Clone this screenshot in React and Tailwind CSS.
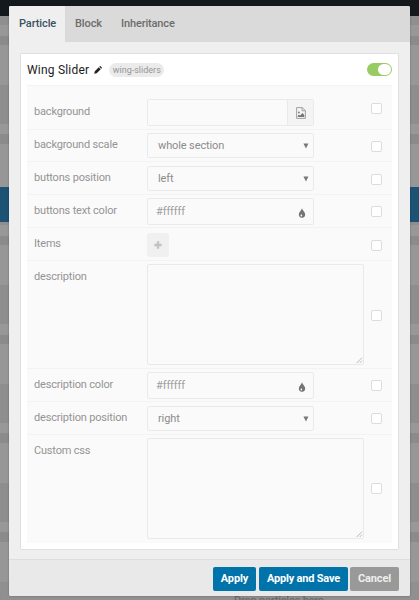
import React from "react";

const bands = [
  ["h-[16px]", "bg-[#14191d]"],
  ["h-[9px]", "bg-[#8f8f8f]"],
  ["h-[11px]", "bg-[#989898]"],
  ["h-[9px]", "bg-[#8b8b8b]"],
  ["h-[40px]", "bg-[#979797]"],
  ["h-[39px]", "bg-[#8e8e8e]"],
  ["h-[10px]", "bg-[#989898]"],
  ["h-[10px]", "bg-[#8b8b8b]"],
  ["h-[43px]", "bg-[#979797]"],
  ["h-[35px]", "bg-[#1c5274]"],
  ["h-[3px]", "bg-[#8e8e8e]"],
  ["h-[11px]", "bg-[#989898]"],
  ["h-[9px]", "bg-[#8b8b8b]"],
  ["h-[40px]", "bg-[#979797]"],
  ["h-[39px]", "bg-[#8e8e8e]"],
  ["h-[11px]", "bg-[#989898]"],
  ["h-[9px]", "bg-[#8b8b8b]"],
  ["h-[40px]", "bg-[#979797]"],
  ["h-[39px]", "bg-[#8e8e8e]"],
  ["h-[10px]", "bg-[#989898]"],
  ["h-[10px]", "bg-[#8b8b8b]"],
  ["h-[40px]", "bg-[#979797]"],
  ["h-[39px]", "bg-[#8e8e8e]"],
  ["h-[10px]", "bg-[#989898]"],
  ["h-[10px]", "bg-[#8b8b8b]"],
  ["h-[40px]", "bg-[#979797]"],
];

function Backdrop() {
  return (
    <div className="flex h-full flex-col">
      {bands.map(([h, bg], i) => (
        <div key={i} className={`shrink-0 ${h} ${bg}`} />
      ))}
      <div className="flex-1 overflow-hidden bg-[#909090] pt-[12px] pl-[234px] text-[11px] leading-[13px] font-medium tracking-[-0.2px] whitespace-nowrap text-[#6c6c6c]">
        Drop particles here
      </div>
    </div>
  );
}

function Row({ label, height, labelTop = "pt-[5px]", fieldTop = "pt-[3px]", check = "pt-[10px]", last, children }) {
  return (
    <div className={`flex shrink-0 pl-[7px] ${height} ${last ? "" : "border-b border-[#f3f3f3]"}`}>
      <div className={`w-[113px] shrink-0 text-[11px] leading-[14px] tracking-[-0.18px] whitespace-nowrap text-[#949494] ${labelTop}`}>{label}</div>
      <div className={`w-[228px] shrink-0 ${fieldTop}`}>{children}</div>
      <div className={`-ml-[4px] ${check}`}>
        <div className="size-[11px] rounded-[2px] border border-[#dcdcdc] bg-white" />
      </div>
    </div>
  );
}

function Select({ value }) {
  return (
    <div className="flex h-[25px] w-[167px] items-center justify-between rounded-[2px] border border-[#eaeaea] pr-[4px] pl-[10px] text-[11px] tracking-[-0.12px] text-[#8c8c8c]">
      <span className="pt-[2px]">{value}</span>
      <svg width="6" height="6" viewBox="0 0 6 6" fill="#777">
        <path d="M.4.4h5L3 5.4z" />
      </svg>
    </div>
  );
}

function ColorInput() {
  return (
    <div className="flex h-[27px] w-[167px] items-center justify-between rounded-[2px] border border-[#eaeaea] pr-[7px] pl-[8px] text-[11px] tracking-[-0.1px] text-[#9f9f9f]">
      <span className="pt-[1px]">#ffffff</span>
      <svg width="8" height="10" viewBox="0 0 8 10" className="mt-[3px]">
        <path d="M4 .2C3.6 2.1 .8 4 .8 6.6A3.1 3.1 0 0 0 4 9.7a3.1 3.1 0 0 0 3.2-3.1C7.2 4 4.4 2.1 4 .2z" fill="#747474" />
        <path d="M3.3 6.1c-.1.6-.8.9-.8 1.5a.85.85 0 0 0 1.7 0c0-.6-.8-.9-.9-1.5z" fill="#fafafa" />
      </svg>
    </div>
  );
}

function TextArea() {
  return (
    <div className="flex h-[101px] w-[217px] items-end justify-end rounded-[2px] border border-[#e9e9e9]">
      <svg width="7" height="7" viewBox="0 0 7 7" stroke="#aaa" strokeWidth=".8">
        <path d="M.7 6 6 .7M3.7 6 6 3.7" />
      </svg>
    </div>
  );
}

export default function App() {
  return (
    <div className="relative h-[600px] w-[419px] overflow-hidden font-[Roboto,sans-serif]">
      <Backdrop />
      <div className="absolute top-[6px] left-[9px] flex h-[590px] w-[401px] flex-col overflow-hidden rounded-[2px] bg-[#efefef] shadow-[0_0_2px_rgba(0,0,0,0.35)]">
        <div className="flex h-[36px] shrink-0 bg-[#dadada] text-[11px] leading-[36px] font-medium text-[#6c6c6c]">
          <div className="w-[56px] bg-[#efefef] pl-[10px] tracking-[-0.1px] text-[#3c5262]">Particle</div>
          <div className="w-[46px] pl-[10px] tracking-[-0.1px]">Block</div>
          <div className="pl-[10px] tracking-[-0.15px]">Inheritance</div>
        </div>

        <div className="mt-[11px] ml-[11px] flex h-[497px] w-[379px] shrink-0 flex-col rounded-[1px] border border-[#e0e0e0] bg-white px-[6px]">
          <div className="flex h-[31px] shrink-0 items-center text-[12px] text-[#1c1c1c]">
            <span className="tracking-[0.2px]">Wing Slider</span>
            <svg width="8" height="8" viewBox="0 0 8 8" fill="#222" className="ml-[5px]">
              <path d="M.2 7.8.8 5.3 4.8 1.3l1.9 1.9-4 4zM5.3.8l.5-.5q.4-.4.8 0l1.1 1.1q.4.4 0 .8l-.5.5z" />
            </svg>
            <span className="ml-[7px] h-[14px] w-[55px] rounded-full bg-[#ebebeb] text-center text-[9px] leading-[14px] whitespace-nowrap text-[#969696]">wing-sliders</span>
            <div className="ml-auto flex h-[13px] w-[25px] items-center justify-end rounded-full bg-[#98cb62] p-[1px]">
              <div className="h-[11px] w-[13px] rounded-full bg-white" />
            </div>
          </div>

          <div className="flex h-[458px] w-[365px] shrink-0 flex-col border-t border-[#f3f3f3] bg-[#fafafa]">
            <Row label="background" height="h-[44px]" labelTop="pt-[19px]" fieldTop="pt-[13px]" check="pt-[17px]">
              <div className="flex h-[27px] w-[167px] rounded-[2px] border border-[#eaeaea]">
                <div className="flex-1" />
                <div className="flex w-[26px] items-center justify-center border-l border-[#eaeaea] bg-[#f4f4f4]">
                  <svg width="10" height="12" viewBox="0 0 10 12" fill="none" stroke="#999" strokeWidth=".9">
                    <path d="M.6.6h5.6l3.2 3.1v7.7H.6zM6.1.7v3.1h3.2" />
                    <path d="M1.8 10V8.7l1.1-1 1.1.9 2.5-2.5 1.8 1.8V10z" fill="#777" stroke="none" />
                    <circle cx="2.9" cy="5.5" r=".9" fill="#777" stroke="none" />
                  </svg>
                </div>
              </div>
            </Row>
            <Row label="background scale" height="h-[32px]" labelTop="pt-[8px]" check="pt-[11px]"><Select value="whole section" /></Row>
            <Row label="buttons position" height="h-[33px]" labelTop="pt-[9px]" fieldTop="pt-[4px]" check="pt-[12px]"><Select value="left" /></Row>
            <Row label="buttons text color" height="h-[33px]" labelTop="pt-[9px]" check="pt-[11px]"><ColorInput /></Row>
            <Row label="Items" height="h-[33px]" labelTop="pt-[9px]" fieldTop="pt-[5px]" check="pt-[12px]">
              <div className="flex h-[24px] w-[22px] items-center justify-center rounded-[2px] bg-[#f0f0f0]">
                <svg width="8" height="8" viewBox="0 0 8 8" fill="#c2c2c2">
                  <path d="M2.8.3h2.4v2.5h2.5v2.4H5.2v2.5H2.8V5.2H.3V2.8h2.5z" />
                </svg>
              </div>
            </Row>
            <Row label="description" height="h-[108px]" labelTop="pt-[9px]" check="pt-[49px]"><TextArea /></Row>
            <Row label="description color" height="h-[33px]" labelTop="pt-[9px]" check="pt-[11px]"><ColorInput /></Row>
            <Row label="description position" height="h-[33px]" labelTop="pt-[9px]" fieldTop="pt-[4px]" check="pt-[11px]"><Select value="right" /></Row>
            <Row label="Custom css" height="h-[108px]" labelTop="pt-[9px]" check="pt-[48px]" last><TextArea /></Row>
          </div>
        </div>

        <div className="mt-[9px] flex flex-1 justify-end gap-[3px] border-t border-[#dedede] bg-[#e9e9e9] pt-[7px] pr-[11px] text-[11px] leading-[24px] font-bold text-white">
          <div className="h-[24px] w-[43px] rounded-[2px] bg-[#0073aa] text-center tracking-[-0.1px]">Apply</div>
          <div className="h-[24px] w-[89px] rounded-[2px] bg-[#0073aa] text-center tracking-[-0.2px]">Apply and Save</div>
          <div className="-ml-[1px] h-[24px] w-[49px] rounded-[2px] bg-[#999] text-center tracking-[-0.15px] text-[#efefef]">Cancel</div>
        </div>
      </div>
    </div>
  );
}
